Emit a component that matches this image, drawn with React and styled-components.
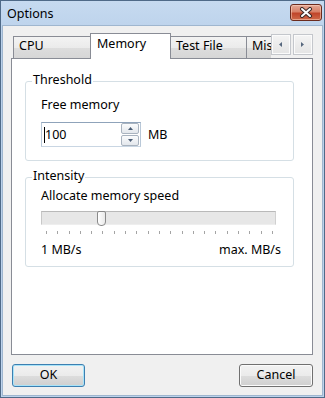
import React from 'react'
import styled, { createGlobalStyle } from 'styled-components'

const GlobalStyle = createGlobalStyle`
  html, body {
    margin: 0;
    padding: 0;
    background: #ffffff;
  }
  body {
    font-family: "Noto Sans", "Open Sans", sans-serif;
    font-size: 12.5px;
    color: #000000;
  }
`

const TICKS = 21

const Options = () => {
  return (
    <>
      <GlobalStyle />
      <Window>
        <TitleBar>
          <Title>Options</Title>
          <CloseButton aria-label='Close'>
            <svg width='14' height='11' viewBox='0 0 14 11'>
              <path d='M3 2 L11 9 M11 2 L3 9' stroke='#3a2a28' strokeWidth='4' strokeLinecap='round' />
              <path d='M3 2 L11 9 M11 2 L3 9' stroke='#ffffff' strokeWidth='2' strokeLinecap='round' />
            </svg>
          </CloseButton>
        </TitleBar>
        <Body>
          <TabRow>
            <TabList>
              <Tab $w={78}>CPU</Tab>
              <Tab $w={81} $active>Memory</Tab>
              <Tab $w={77}>Test File</Tab>
              <Tab $w={70}>Misc</Tab>
            </TabList>
            <Scroller>
              <ScrollButton>
                <svg width='4' height='5' viewBox='0 0 4 5'>
                  <path d='M3 0 L0 2.5 L3 5 Z' fill='#56677e' />
                </svg>
              </ScrollButton>
              <ScrollButton>
                <svg width='4' height='5' viewBox='0 0 4 5'>
                  <path d='M0 0 L3 2.5 L0 5 Z' fill='#56677e' />
                </svg>
              </ScrollButton>
            </Scroller>
          </TabRow>
          <Panel>
            <Group $pad='6px 12px 13px 15px'>
              <Legend>Threshold</Legend>
              <FieldLabel $gap={9}>Free memory</FieldLabel>
              <SpinRow>
                <InputBox>
                  <Caret />
                  <Value>100</Value>
                  <SpinColumn>
                    <SpinButton>
                      <svg width='5' height='3' viewBox='0 0 5 3'>
                        <path d='M0 3 L2.5 0 L5 3 Z' fill='#4b5d75' />
                      </svg>
                    </SpinButton>
                    <SpinButton>
                      <svg width='5' height='3' viewBox='0 0 5 3'>
                        <path d='M0 0 L2.5 3 L5 0 Z' fill='#4b5d75' />
                      </svg>
                    </SpinButton>
                  </SpinColumn>
                </InputBox>
                <Unit>MB</Unit>
              </SpinRow>
            </Group>
            <Group $pad='1px 12px 8px 15px'>
              <Legend>Intensity</Legend>
              <FieldLabel $gap={7}>Allocate memory speed</FieldLabel>
              <Slider>
                <Track />
                <Thumb style={{ left: 56 }} />
                <Ticks>
                  {Array.from({ length: TICKS }).map((_, i) => (
                    <Tick key={i} />
                  ))}
                </Ticks>
              </Slider>
              <RangeLabels>
                <span>1 MB/s</span>
                <span>max. MB/s</span>
              </RangeLabels>
            </Group>
          </Panel>
          <Footer>
            <DialogButton $w={73} $default>OK</DialogButton>
            <DialogButton $w={74}>Cancel</DialogButton>
          </Footer>
        </Body>
      </Window>
    </>
  )
}

const Window = styled.div`
  width: 325px;
  height: 398px;
  box-sizing: border-box;
  display: flex;
  flex-direction: column;
  border: 1px solid #4f6a88;
  background: linear-gradient(#c6daf0, #b9d0ea 40px, #bdd3ec);
`
const TitleBar = styled.div`
  height: 25px;
  flex: none;
  display: flex;
  justify-content: space-between;
  padding: 0 2px 0 6px;
`
const Title = styled.span`
  line-height: 16px;
  padding-top: 5px;
`
const CloseButton = styled.div`
  width: 32px;
  height: 17px;
  margin-top: 3px;
  box-sizing: border-box;
  border: 1px solid #6b2b1e;
  border-radius: 3px;
  display: flex;
  align-items: center;
  justify-content: center;
  background: linear-gradient(#e3a896 0%, #d88168 45%, #c0452a 55%, #cf6a4a 100%);
  box-shadow: inset 0 0 0 1px rgba(255, 220, 200, 0.5);
`
const Body = styled.div`
  flex: 1;
  margin: 0 2px 2px;
  background: #f0f0f0;
  display: flex;
  flex-direction: column;
  padding: 7px 9px 0 8px;
  box-shadow: 0 0 0 1px #9fb6cf;
`
const TabRow = styled.div`
  height: 26px;
  flex: none;
  display: flex;
  margin-bottom: -1px;
  padding-left: 2px;
  position: relative;
  z-index: 1;
`
const TabList = styled.div`
  flex: 1;
  display: flex;
  align-items: flex-end;
  overflow: hidden;
`
const Tab = styled.div`
  flex: none;
  box-sizing: border-box;
  width: ${(p) => p.$w}px;
  height: ${(p) => (p.$active ? 26 : 23)}px;
  margin-left: -1px;
  border: 1px solid #898c95;
  border-bottom: ${(p) => (p.$active ? 'none' : '1px solid #898c95')};
  padding: ${(p) => (p.$active ? '2px 0 0 6px' : '1px 0 0 5px')};
  line-height: 16px;
  white-space: nowrap;
  position: relative;
  z-index: ${(p) => (p.$active ? 2 : 1)};
  background: ${(p) =>
    p.$active ? '#ffffff' : 'linear-gradient(#f3f3f3, #ebebeb 50%, #dddddd 51%, #d6d6d6)'};
  &:first-child {
    margin-left: 0;
  }
`
const Scroller = styled.div`
  flex: none;
  display: flex;
  gap: 2px;
  margin-top: 1px;
`
const ScrollButton = styled.div`
  width: 20px;
  height: 21px;
  box-sizing: border-box;
  border: 1px solid #c4c7cc;
  background: linear-gradient(#f4f4f4, #e4e4e4);
  box-shadow: inset 0 0 0 1px #fbfbfb;
  display: flex;
  align-items: center;
  justify-content: center;
`
const Panel = styled.div`
  height: 297px;
  flex: none;
  box-sizing: border-box;
  border: 1px solid #898c95;
  background: #ffffff;
  padding: 13px 18px 0 13px;
  display: flex;
  flex-direction: column;
  gap: 7px;
`
const Group = styled.fieldset`
  margin: 0;
  min-width: 0;
  border: 1px solid #d5dfe5;
  border-radius: 3px;
  padding: ${(p) => p.$pad};
`
const Legend = styled.legend`
  padding: 0 1px 3px;
  margin-left: -9px;
  line-height: 16px;
`
const FieldLabel = styled.div`
  line-height: 16px;
  margin-bottom: ${(p) => p.$gap}px;
`
const SpinRow = styled.div`
  display: flex;
  align-items: center;
  gap: 7px;
`
const InputBox = styled.div`
  width: 100px;
  height: 25px;
  box-sizing: border-box;
  border: 1px solid;
  border-color: #8fa3ba #b9c8d8 #c9d6e3 #b9c8d8;
  background: #ffffff;
  display: flex;
  align-items: center;
  padding: 0 1px 0 2px;
`
const Caret = styled.span`
  width: 1px;
  height: 16px;
  background: #000000;
`
const Value = styled.span`
  line-height: 16px;
  margin-left: 0;
`
const SpinColumn = styled.div`
  margin-left: auto;
  display: flex;
  flex-direction: column;
  gap: 1px;
`
const SpinButton = styled.div`
  width: 18px;
  height: 11px;
  box-sizing: border-box;
  border: 1px solid #a9b3bf;
  border-radius: 2px;
  background: linear-gradient(#fbfcfd, #e3e7ec);
  display: flex;
  align-items: center;
  justify-content: center;
`
const Unit = styled.span`
  line-height: 16px;
`
const Slider = styled.div`
  position: relative;
  width: 235px;
`
const Track = styled.div`
  height: 14px;
  box-sizing: border-box;
  border: 1px solid;
  border-color: #b9b9b9 #d0d0d0 #eeeeee #c8c8c8;
  background: #e7e7e7;
`
const Thumb = styled.div`
  position: absolute;
  top: 0;
  width: 9px;
  height: 15px;
  box-sizing: border-box;
  border: 1px solid #8a8a8a;
  border-radius: 2px 2px 4px 4px;
  background: linear-gradient(90deg, #ffffff, #e9e9e9);
`
const Ticks = styled.div`
  display: flex;
  justify-content: space-between;
  padding: 6px 3px 0 5px;
  height: 3px;
`
const Tick = styled.span`
  width: 1px;
  height: 3px;
  background: #a4a4a4;
`
const RangeLabels = styled.div`
  display: flex;
  justify-content: space-between;
  line-height: 16px;
  margin-top: 8px;
`
const Footer = styled.div`
  flex: 1;
  display: flex;
  align-items: center;
  justify-content: space-between;
  padding-left: 1px;
`
const DialogButton = styled.button`
  width: ${(p) => p.$w}px;
  height: 23px;
  padding: 0;
  font: inherit;
  line-height: 16px;
  color: #000000;
  border: 1px solid ${(p) => (p.$default ? '#3c7fb1' : '#707070')};
  border-radius: 3px;
  background: linear-gradient(#f2f2f2 0%, #ebebeb 50%, #dddddd 51%, #cfcfcf 100%);
  box-shadow: inset 0 0 0 1px ${(p) => (p.$default ? '#a8e3f8' : '#fbfbfb')};
`

export default Options
